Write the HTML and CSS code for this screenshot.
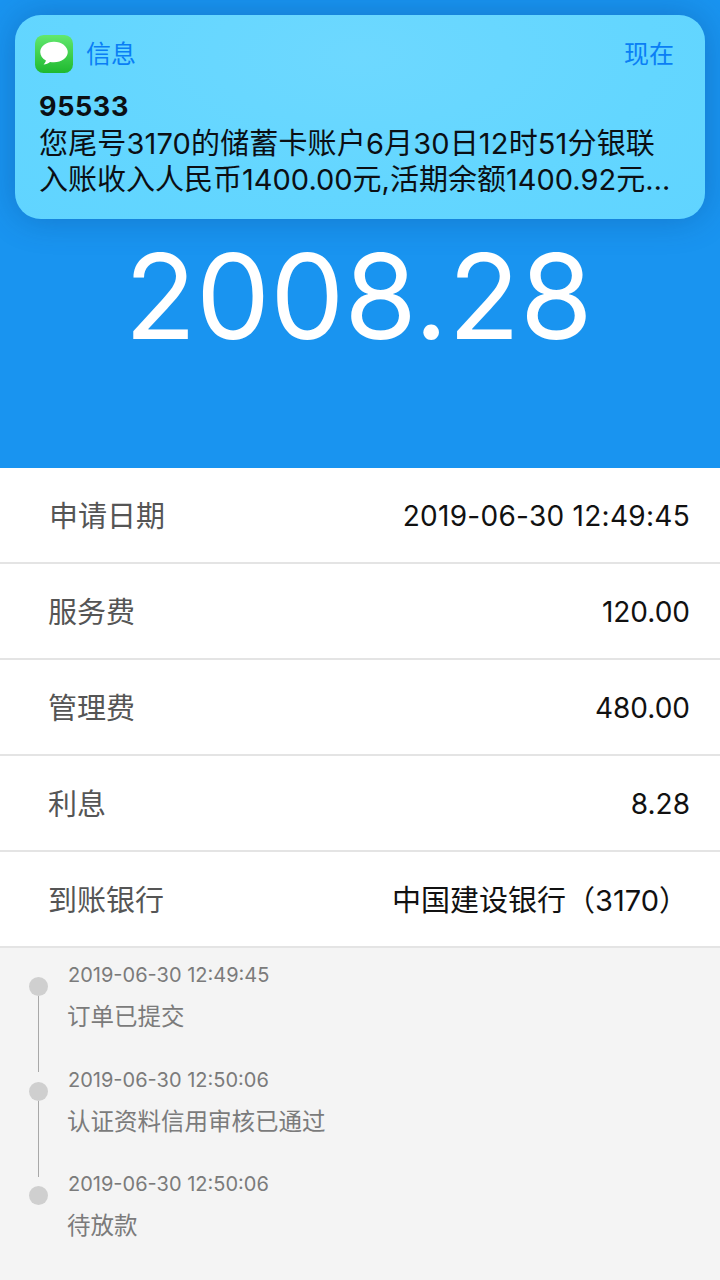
FILE: index.html
```html
<!DOCTYPE html>
<html lang="zh-CN">
<head>
<meta charset="utf-8">
<title>订单详情</title>
<link rel="stylesheet" href="styles.css">
</head>
<body>
<header class="hero">
  <div class="amount">2008.28</div>
  <section class="notice">
    <div class="notice-head">
      <svg class="app-icon" viewBox="0 0 40 40" aria-hidden="true">
        <defs><linearGradient id="g" x1="0" y1="0" x2="0" y2="1"><stop offset="0" stop-color="#62e86e"/><stop offset="1" stop-color="#1fb92f"/></linearGradient></defs>
        <rect width="40" height="40" rx="9" fill="url(#g)"/>
        <path d="M20 7C12 7 5.500 11.800 5.500 17.800c0 3.800 2.400 7.100 6 9-.3 1.500-1.200 3-2.500 4.200 2.600-.2 5-1.200 6.800-2.700 1.300.3 2.800.5 4.200.5 8 0 14.500-4.800 14.500-10.800S28 7 20 7z" fill="#fff"/>
      </svg>
      <span class="app-name">信息</span>
      <span class="time">现在</span>
    </div>
    <div class="sender">95533</div>
    <p class="msg msg-first">您尾号3170的储蓄卡账户6月30日12时51分银联</p>
    <p class="msg">入账收入人民币1400.00元,活期余额1400.92元…</p>
  </section>
</header>
<main>
  <div class="row"><span class="label label-wide">申请日期</span><span class="value value-date">2019-06-30 12:49:45</span></div>
  <div class="row"><span class="label">服务费</span><span class="value">120.00</span></div>
  <div class="row"><span class="label">管理费</span><span class="value">480.00</span></div>
  <div class="row"><span class="label">利息</span><span class="value">8.28</span></div>
  <div class="row"><span class="label">到账银行</span><span class="value value-bank">中国建设银行（3170）</span></div>
</main>
<section class="timeline">
  <div class="step"><div class="dot"></div><div class="step-date">2019-06-30 12:49:45</div><div class="step-text">订单已提交</div></div>
  <div class="step"><div class="dot"></div><div class="step-date">2019-06-30 12:50:06</div><div class="step-text">认证资料信用审核已通过</div></div>
  <div class="step step-last"><div class="dot"></div><div class="step-date">2019-06-30 12:50:06</div><div class="step-text">待放款</div></div>
</section>
</body>
</html>
```
FILE: styles.css
```css
* { box-sizing: border-box; }
html, body { margin: 0; padding: 0; }
body {
  width: 720px;
  height: 1280px;
  overflow: hidden;
  background: #f4f4f4;
  font-family: Inter, "Noto Sans CJK SC", sans-serif;
}
.hero {
  position: relative;
  height: 468px;
  background: #1994f0;
  padding-top: 232px;
  text-align: center;
}
.amount {
  color: #fff;
  font-size: 117.500px;
  line-height: 128px;
  font-weight: 400;
  margin-left: -3px;
}
.notice {
  position: absolute;
  left: 15px;
  top: 15px;
  width: 690px;
  height: 204px;
  border-radius: 26px;
  background: radial-gradient(ellipse at 50% 20%, #6dd8ff 0%, #63d6ff 60%, #60d4ff 100%);
  box-shadow: 0 0 34px rgba(10, 60, 120, .32);
  padding: 20px 31px 0 20px;
  text-align: left;
  color: #0b0f14;
}
.notice-head { display: flex; align-items: center; height: 38px; }
.app-icon { width: 38px; height: 38px; flex: none; }
.app-name { margin-left: 13px; font-size: 25px; line-height: 38px; color: #0a7ef5; }
.time { margin-left: auto; font-size: 25px; line-height: 38px; color: #0a7ef5; }
.sender { margin: 17px 0 0 4px; font-size: 27px; line-height: 34px; font-weight: 700; letter-spacing: .6px; }
.msg { margin: 0 0 0 4px; font-size: 29px; line-height: 36px; white-space: nowrap; position: relative; top: 2px; }
.msg-first { letter-spacing: .15px; }
.row {
  display: flex;
  justify-content: space-between;
  align-items: center;
  height: 96px;
  padding: 0 30px 0 48px;
  background: #fff;
  border-bottom: 2px solid #e4e4e4;
}
.label { color: #555; font-size: 29px; margin-top: -2px; }
.label-wide { margin-left: 1px; }
.value { color: #111; font-size: 28px; margin-top: 2px; }
.value-date { letter-spacing: .28px; }
.value-bank { font-size: 29px; margin: -2px 2px 0 0; }
.timeline { padding-top: 15px; }
.step { position: relative; height: 104.500px; padding-left: 68px; }
.dot {
  position: absolute;
  left: 29px;
  top: 14px;
  width: 19px;
  height: 19px;
  border-radius: 50%;
  background: #cfcfcf;
}
.step::after {
  content: "";
  position: absolute;
  left: 38px;
  top: 33px;
  width: 1px;
  height: 76px;
  background: #a8a8a8;
}
.step-last::after { display: none; }
.step-date { color: #7b7b7b; font-size: 20px; line-height: 24px; }
.step-text { margin: 14px 0 0 -1px; color: #7b7b7b; font-size: 23.500px; line-height: 32px; }
```
